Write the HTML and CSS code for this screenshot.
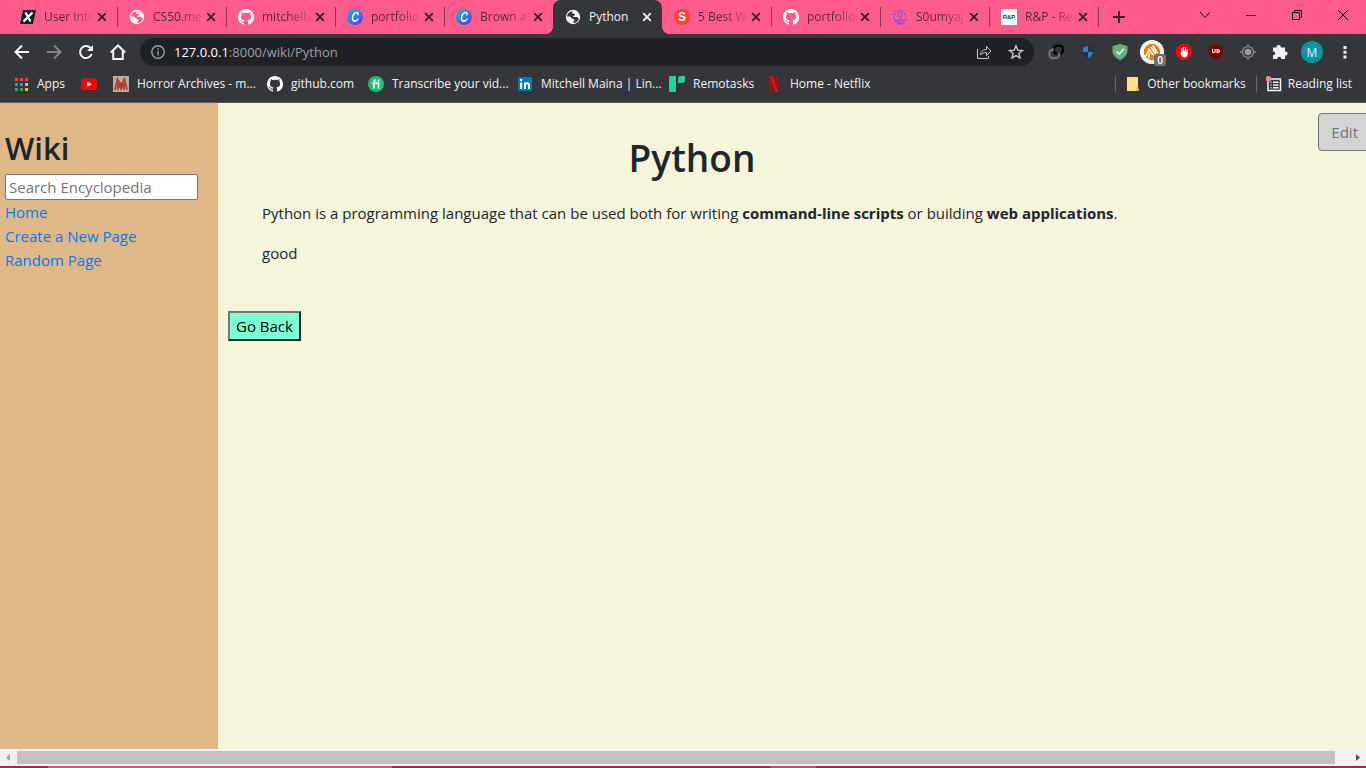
FILE: index.html
```
<!DOCTYPE html>
<html lang="en">
<head>
<meta charset="utf-8">
<title>Python</title>
<link rel="stylesheet" href="styles.css">
</head>
<body>
<svg class="defs" aria-hidden="true">
  <symbol id="x" viewBox="0 0 10 10"><path d="M1.2 1.2l7.6 7.6M8.8 1.2L1.2 8.8" stroke="currentColor" stroke-width="1.8" fill="none"/></symbol>
  <symbol id="github" viewBox="0 0 16 16"><path fill="currentColor" fill-rule="evenodd" d="M8 0C3.58 0 0 3.58 0 8c0 3.54 2.29 6.53 5.47 7.59.4.07.55-.17.55-.38 0-.19-.01-.82-.01-1.49-2.01.37-2.53-.49-2.69-.94-.09-.23-.48-.94-.82-1.13-.28-.15-.68-.52-.01-.53.63-.01 1.08.58 1.23.82.72 1.21 1.87.87 2.33.66.07-.52.28-.87.51-1.07-1.78-.2-3.64-.89-3.64-3.95 0-.87.31-1.59.82-2.15-.08-.2-.36-1.02.08-2.12 0 0 .67-.21 2.2.82.64-.18 1.32-.27 2-.27s1.36.09 2 .27c1.53-1.04 2.2-.82 2.2-.82.44 1.1.16 1.92.08 2.12.51.56.82 1.27.82 2.15 0 3.07-1.87 3.75-3.65 3.95.29.25.54.73.54 1.48 0 1.07-.01 1.93-.01 2.2 0 .21.15.46.55.38A8.01 8.01 0 0 0 16 8c0-4.42-3.58-8-8-8z"/></symbol>
  <symbol id="globe" viewBox="0 0 16 16"><circle cx="8" cy="8" r="7.2" fill="#f5f5f5"/><path class="land" d="M8.2 2.2c-1 .6-1.4 1.5-.6 2.2.9.5 1.8-.1 2.3.7.4.9-.4 1.4-1.3 1.6-.8.2-.6 1.1.2 1.3 1.5.1 3-.3 4 .6 1 .7 1.2 1.2.7 2.1-1.1 2.4-3.4 3.2-5.3 3.1-.4-.8.5-1.3 1-2 .5-.9.1-1.7-.8-1.9-1.4-.2-2.2-.8-2.6-1.7C5.200 7 3.600 7.600 2 7.400c.4-2.700 2.700-5.200 6.200-5.200z"/></symbol>
  <symbol id="canva" viewBox="0 0 16 16"><defs><linearGradient id="cg" x1="0" y1="0" x2=".8" y2="1"><stop offset="0" stop-color="#00c4cc"/><stop offset=".5" stop-color="#2a85e5"/><stop offset="1" stop-color="#7d2ae8"/></linearGradient></defs><circle cx="8" cy="8" r="8" fill="url(#cg)"/><path d="M10.800 5.700c.6-.8.3-2.200-1.100-2.200-2.300 0-4.200 2.800-4.200 5.400 0 2 1 3.300 2.500 3.300 1.300 0 2.300-.9 3-2" fill="none" stroke="#fff" stroke-width="1.500" stroke-linecap="round"/></symbol>
</svg>

<header class="browser">
  <nav class="tabs" aria-label="Tabs">
    <div class="tab"><svg class="fav" viewBox="0 0 16 16"><path d="M3 1h13l-3 14H0z" fill="#14232b"/><path d="M5.500 3.500l5 9M12.500 3.500l-9 9" stroke="#fff" stroke-width="2.200"/></svg><span class="tab-title">User Inte</span><button class="close" aria-label="Close tab"><svg><use href="#x"/></svg></button></div>
    <div class="tab"><svg class="fav on-pink"><use href="#globe"/></svg><span class="tab-title">CS50.me</span><button class="close" aria-label="Close tab"><svg><use href="#x"/></svg></button></div>
    <div class="tab"><svg class="fav"><use href="#github"/></svg><span class="tab-title">mitchells</span><button class="close" aria-label="Close tab"><svg><use href="#x"/></svg></button></div>
    <div class="tab"><svg class="fav"><use href="#canva"/></svg><span class="tab-title">portfolio</span><button class="close" aria-label="Close tab"><svg><use href="#x"/></svg></button></div>
    <div class="tab before-active"><svg class="fav"><use href="#canva"/></svg><span class="tab-title">Brown a</span><button class="close" aria-label="Close tab"><svg><use href="#x"/></svg></button></div>
    <div class="tab active"><svg class="fav on-dark"><use href="#globe"/></svg><span class="tab-title">Python</span><button class="close" aria-label="Close tab"><svg><use href="#x"/></svg></button></div>
    <div class="tab"><svg class="fav" viewBox="0 0 16 16"><circle cx="8" cy="8" r="8" fill="#f44336"/><text x="8" y="12" text-anchor="middle" font-size="12" font-weight="700" fill="#fff">S</text></svg><span class="tab-title">5 Best W</span><button class="close" aria-label="Close tab"><svg><use href="#x"/></svg></button></div>
    <div class="tab"><svg class="fav"><use href="#github"/></svg><span class="tab-title">portfolio</span><button class="close" aria-label="Close tab"><svg><use href="#x"/></svg></button></div>
    <div class="tab"><svg class="fav" viewBox="0 0 16 16" fill="none" stroke="#9251dc" stroke-width="1.200"><path d="M3 3.200a7 7 0 0 1 11 3.300M13 12.800A7 7 0 0 1 2 9.500M1 5.500h3M12 10.500h3M1 8h2M13 8h2M3.500 13.500c1-4 8-4 9 0M5 14.800h6"/><circle cx="8" cy="6" r="2.200"/><circle cx="8" cy="12" r="1"/></svg><span class="tab-title">S0umyaj</span><button class="close" aria-label="Close tab"><svg><use href="#x"/></svg></button></div>
    <div class="tab"><svg class="fav" viewBox="0 0 16 16"><path d="M0 0h16v16H0z" fill="#fff"/><text x="8" y="10" text-anchor="middle" font-size="6" font-weight="700" fill="#174d25">R&amp;P</text></svg><span class="tab-title">R&amp;P - Re</span><button class="close" aria-label="Close tab"><svg><use href="#x"/></svg></button></div>
    <button class="new-tab" aria-label="New tab"><svg viewBox="0 0 12 12"><path d="M6 0v12M0 6h12" stroke="currentColor" stroke-width="1.800"/></svg></button>
    <div class="window-controls">
      <button aria-label="Search tabs"><svg viewBox="0 0 12 12"><path d="M1 3l5 5.500L11 3"/></svg></button>
      <button aria-label="Minimize"><svg viewBox="0 0 12 12"><path d="M1 6.500h10"/></svg></button>
      <button aria-label="Restore"><svg viewBox="0 0 12 12"><path d="M1.500 3.500h7v7h-7zM3.500 3.500v-2h7v7h-2"/></svg></button>
      <button aria-label="Close"><svg viewBox="0 0 12 12"><path d="M1 1l10 10M11 1L1 11"/></svg></button>
    </div>
  </nav>

  <div class="toolbar">
    <div class="nav-buttons">
      <button aria-label="Back"><svg viewBox="0 0 16 16"><path d="M15 8H2M8 1.500L1.500 8 8 14.500"/></svg></button>
      <button class="dim" aria-label="Forward"><svg viewBox="0 0 16 16"><path d="M1 8h13M8 1.500L14.500 8 8 14.500"/></svg></button>
      <button aria-label="Reload"><svg viewBox="0 0 16 16"><path d="M13.700 10A6 6 0 1 1 12.500 4"/><path d="M15 1v6H9z" fill="currentColor" stroke="none"/></svg></button>
      <button aria-label="Home"><svg viewBox="0 0 16 16"><path d="M.8 8.500L8 1.500l7.200 7M3.200 7v8h9.600V7"/></svg></button>
    </div>
    <div class="omnibox">
      <svg class="info" viewBox="0 0 14 14"><circle cx="7" cy="7" r="6.200"/><path d="M7 6v4.500M7 3.300v1.600"/></svg>
      <span class="url"><b>127.0.0.1</b>:8000/wiki/Python</span>
      <button aria-label="Share"><svg viewBox="0 0 16 16"><path d="M1.500 5v9.500h11V12M4.500 11c.5-4 2.700-5.500 6-5.500V2.500L15 7l-4.500 4.500v-3c-3 0-4.500.7-6 2.500z"/></svg></button>
      <button aria-label="Bookmark"><svg class="star" viewBox="0 0 16 16"><path d="M8 1.800l1.800 4.300 4.700.4-3.600 3 1.100 4.600-4-2.500-4 2.500 1.100-4.600-3.600-3 4.700-.4z"/></svg></button>
    </div>
    <div class="extensions">
      <button aria-label="Link extension"><svg viewBox="0 0 16 16" fill="none" stroke-width="2.400"><rect x="6" y="1.800" width="8.800" height="8" rx="3" stroke="#050505"/><path d="M6 5.800H4.500A3 3 0 0 0 1.500 8.800v2.200a3 3 0 0 0 3 3H8a3 3 0 0 0 3-3V8.500" stroke="#707070"/></svg></button>
      <button aria-label="Shield extension"><svg viewBox="0 0 16 16"><path d="M8 1l5.500 2v4.500c0 3.500-2.500 6-5.500 7.500-3-1.500-5.500-4-5.500-7.500V3z" fill="#28333d"/><path d="M3 3.500L8 2v6H3zM8 8h5c-.5 3-2.600 5-5 6.200z" fill="#2f80d0"/></svg></button>
      <button aria-label="AdGuard"><svg viewBox="0 0 16 16"><path d="M8 0l7.500 2v5c0 4-3.200 7-7.500 9C3.700 14 .5 11 .5 7V2z" fill="#67b279"/><path d="M4.500 7.500L7.300 10l4.500-5" fill="none" stroke="#fff" stroke-width="1.500"/></svg></button>
      <button class="avast" aria-label="Avast, 0 blocked"><svg viewBox="0 0 24 24"><circle cx="12" cy="12" r="12" fill="#fff"/><circle cx="12" cy="12" r="8.200" fill="#f70"/><path d="M4.500 17.500c2-1.500 3-3.500 4-6.500M8.500 18l1-4.500M8.500 9l5 6M11 7.500l4.500 6M13 6l4 6.500" stroke="#fff" stroke-width="1.600" stroke-linecap="round" fill="none"/></svg><span class="badge">0</span></button>
      <button aria-label="AdBlock"><svg viewBox="0 0 16 16"><path d="M5 0h6l5 5v6l-5 5H5l-5-5V5z" fill="#e40d0d"/><path d="M4 8l1.500.7V4h1v3.500h.7V3h1v4.500h.7V3.300h1v4.500h.7V5h1v5c0 2-1 3.500-3.300 3.500C6 13.500 5.500 11.500 4 8z" fill="#fff"/></svg></button>
      <button aria-label="uBlock Origin"><svg viewBox="0 0 16 16"><path d="M8 0c2 1.500 4 2 6.500 2v6c0 4-3 6.500-6.500 8-3.500-1.500-6.500-4-6.500-8V2C4 2 6 1.500 8 0z" fill="#800000"/><path d="M4.500 5v2.500c0 1.500 2.600 1.500 2.600 0V5M9 5.500v3c3.200 0 3.200-3 0-3z" fill="none" stroke="#fff" stroke-width="1.100"/></svg></button>
      <button aria-label="Target extension"><svg viewBox="0 0 16 16"><circle cx="8" cy="8" r="5.500" fill="none" stroke="#858585" stroke-width="1.400"/><circle cx="8" cy="8" r="3.300" fill="#999"/><path d="M8 0v3M8 13v3M0 8h3M13 8h3" stroke="#858585" stroke-width="1.500"/></svg></button>
      <button aria-label="Extensions"><svg viewBox="0 0 16 16"><path d="M6.500 1C8 1 9 2 8.800 3.500H13V7.500c3.500-.2 3.500 4 0 4V15H9.200c0-3-4-3-4 0H1v-4c3 0 3-3.600 0-3.600V3.500h3.700C4.300 2 5.200 1 6.500 1z" fill="#f1f3f4"/></svg></button>
    </div>
    <button class="profile" aria-label="Profile M">M</button>
    <button class="menu" aria-label="Menu"><svg viewBox="0 0 4 14" fill="#f1f3f4"><path d="M.5 1h3v3h-3zM.5 5.700h3v3h-3zM.5 10.400h3v3h-3z"/></svg></button>
  </div>

  <nav class="bookmarks" aria-label="Bookmarks">
    <div class="bookmark-list">
      <a href="#apps"><svg viewBox="0 0 16 16"><path d="M2 2h3v3H2zM7 2h3v3H7zM12 2h3v3h-3z" fill="#ea4335"/><path d="M2 7h3v3H2zM2 12h3v3H2zM7 12h3v3H7z" fill="#34a853"/><path d="M7 7h3v3H7z" fill="#4285f4"/><path d="M12 7h3v3h-3zM12 12h3v3h-3z" fill="#fbbc04"/></svg>Apps</a>
      <a href="#youtube" aria-label="YouTube"><svg viewBox="0 0 16 16"><rect y="2.500" width="16" height="11.500" rx="2.500" fill="#f00"/><path d="M6.300 5.800v5l4.300-2.500z" fill="#fff"/></svg></a>
      <a href="#horror"><svg viewBox="0 0 16 16"><path d="M0 0h16v16H0z" fill="#b8b09c"/><path d="M2 14L4.500 3 8 9l3.500-6L14 14M5 14V7l3 6 3-6v7" fill="none" stroke="#b63a32" stroke-width="1.700"/></svg>Horror Archives - m...</a>
      <a href="#github-home"><svg><use href="#github"/></svg>github.com</a>
      <a href="#transcribe"><svg viewBox="0 0 16 16"><circle cx="8" cy="8" r="8" fill="#1dbf73"/><path d="M6 12.500V6c0-1.300.7-2 2-2M4.200 7h6.300v5.500" fill="none" stroke="#fff" stroke-width="1.700"/><circle cx="10.500" cy="4.500" r="1" fill="#fff"/></svg>Transcribe your vid...</a>
      <a href="#linkedin"><svg viewBox="0 0 16 16"><path d="M1 1h14v14H1z" fill="#0077b5"/><path d="M4.200 6.500V13M8 13V6.500M8 9c0-2.500 4-2.500 4 0v4" fill="none" stroke="#fff" stroke-width="2"/><circle cx="4.200" cy="4" r="1.200" fill="#fff"/></svg>Mitchell Maina | Lin...</a>
      <a href="#remotasks"><svg viewBox="0 0 16 16"><path d="M0 0h7v16H0zM9 7V3c0-2 1-3 3-3h4v4c0 2-1 3-3 3z" fill="#28cf9b"/></svg>Remotasks</a>
      <a href="#netflix"><svg viewBox="0 0 16 16"><path d="M3.500 0h3v16h-3zM9.500 0h3v16h-3z" fill="#b1060f"/><path d="M3.500 0h3l6 16h-3z" fill="#e50914"/></svg>Home - Netflix</a>
    </div>
    <div class="bookmark-end">
      <a href="#other"><svg viewBox="0 0 16 16"><path d="M2 1h11v11l1 3H2z" fill="#ffe082"/><path d="M13 10l-2 2v3h3z" fill="#f1c232"/></svg>Other bookmarks</a>
      <a href="#reading"><svg viewBox="0 0 16 16"><path d="M3 3h11.500v11.500H2V4M4.500 6.200h1M7 6.200h5.500M4.500 9h1M7 9h5.500M4.500 11.800h1M7 11.800h5.500" fill="none" stroke="#f1f3f4" stroke-width="1.500"/><circle cx="2.500" cy="2.800" r="2.800" fill="#f28b82"/></svg>Reading list</a>
    </div>
  </nav>
</header>

<div class="page">
  <aside class="sidebar">
    <h2>Wiki</h2>
    <form><input type="text" aria-label="Search Encyclopedia" placeholder="Search Encyclopedia"></form>
    <a href="#home">Home</a>
    <a href="#create">Create a New Page</a>
    <a href="#random">Random Page</a>
  </aside>
  <main class="main">
    <article>
      <h1>Python</h1>
      <div class="entry">
        <p>Python is a programming language that can be used both for writing <strong>command-line scripts</strong> or building <strong>web applications</strong>.</p>
        <p>good</p>
      </div>
      <button class="go-back" type="button">Go Back</button>
    </article>
    <div class="actions"><button class="edit" type="button">Edit</button></div>
  </main>
</div>

<div class="scrollbar" aria-hidden="true">
  <svg viewBox="0 0 17 17"><path d="M10 5v7L6 8.500z" fill="#a3a3a3"/></svg>
  <div class="track"><div class="thumb"></div></div>
  <svg viewBox="0 0 17 17"><path d="M7 5v7l4-3.500z" fill="#505050"/></svg>
</div>
<footer class="taskbar"><span class="task-open"></span><span class="task-item"></span></footer>
</body>
</html>
```
FILE: styles.css
```
* { box-sizing: border-box; }

body {
  margin: 0;
  height: 100vh;
  display: flex;
  flex-direction: column;
  overflow: hidden;
  font-family: "Open Sans", "Noto Sans", sans-serif;
  font-size: 15px;
  line-height: 24px;
  color: #212529;
}

.defs { position: absolute; width: 0; height: 0; }

button { font: inherit; color: inherit; }

.browser { flex: none; background: #35363a; border-bottom: 1px solid #5b5c5f; }

.browser button {
  display: grid;
  place-items: center;
  padding: 0;
  border: 0;
  background: none;
}

/* Tab strip */
.tabs {
  display: flex;
  height: 34px;
  padding-left: 8px;
  background: #ff5b8c;
  font-size: 12px;
}

.tab {
  display: flex;
  align-items: center;
  flex: 0 1 109px;
  min-width: 0;
  padding: 0 9px 0 12px;
  position: relative;
}

.tab::after {
  content: "";
  position: absolute;
  right: -1px;
  top: 7px;
  width: 1px;
  height: 20px;
  background: #8b3a52;
}

.tab.before-active::after, .tab.active::after { display: none; }

.fav { flex: none; width: 16px; height: 16px; color: #fff; font-family: "Liberation Sans", Arial, sans-serif; }
.on-pink { fill: #ff5b8c; }
.on-dark { fill: #35363a; }

.tab-title {
  flex: 1;
  min-width: 0;
  margin-left: 8px;
  overflow: hidden;
  white-space: nowrap;
  color: #5d2a3a;
  mask-image: linear-gradient(to right, #000 50%, transparent);
}

.close { flex: none; width: 12px; height: 12px; color: #35202a; }
.close svg { width: 10px; height: 10px; }

.tab.active { background: #35363a; border-radius: 8px 8px 0 0; }
.tab.active::before {
  content: "";
  position: absolute;
  left: -8px;
  right: -8px;
  bottom: 0;
  height: 8px;
  background:
    radial-gradient(circle at 0 0, transparent 8px, #35363a 8px) left / 8px 8px no-repeat,
    radial-gradient(circle at 100% 0, transparent 8px, #35363a 8px) right / 8px 8px no-repeat;
}
.tab.active .tab-title { color: #f1f3f4; mask-image: none; }
.tab.active .close { color: #f1f3f4; }

.new-tab { width: 42px; color: #35202a; }
.new-tab svg { width: 12px; height: 12px; }

.window-controls { display: flex; margin-left: auto; height: 29px; }
.window-controls button { width: 46px; }
.window-controls svg { width: 12px; height: 12px; fill: none; stroke: #111; }

/* Address row */
.toolbar { display: flex; align-items: center; height: 36px; padding-right: 13px; color: #f1f3f4; }

.nav-buttons { display: flex; padding: 0 6px; }
.nav-buttons button { width: 32px; height: 32px; }
.nav-buttons svg { width: 16px; height: 16px; fill: none; stroke: currentColor; stroke-width: 2; }
.nav-buttons .dim { color: #85868a; }

.omnibox {
  flex: 1;
  display: flex;
  align-items: center;
  height: 28px;
  padding: 0 2px 0 11px;
  border-radius: 14px;
  background: #202124;
  font-size: 13px;
}
.omnibox svg { width: 16px; height: 16px; fill: none; stroke: #c6c8ca; stroke-width: 1; }
.omnibox .star { stroke-width: 1.4; }
.omnibox .info { width: 14px; height: 14px; stroke: #9aa0a6; stroke-width: 1.4; }
.omnibox button { width: 32px; }
.url { flex: 1; margin-left: 9px; color: #9aa0a6; }
.url b { font-weight: 400; color: #fff; }

.extensions { display: flex; padding-left: 6px; }
.extensions button { width: 32px; height: 32px; }
.extensions svg { width: 16px; height: 16px; }
.extensions .avast { position: relative; }
.extensions .avast svg { width: 24px; height: 24px; }
.badge {
  position: absolute;
  right: 2px;
  bottom: 2px;
  width: 12px;
  height: 12px;
  border-radius: 2px;
  background: #6e7078;
  color: #fff;
  font-size: 10px;
  font-weight: 600;
  line-height: 12px;
  text-align: center;
}

.browser .profile {
  width: 22px;
  height: 22px;
  margin: 0 14px 0 5px;
  border-radius: 50%;
  background: #0097a7;
  font-size: 12px;
}
.browser .menu { width: 16px; height: 24px; }
.menu svg { width: 4px; height: 14px; }

/* Bookmark row */
.bookmarks {
  display: flex;
  justify-content: space-between;
  height: 32px;
  padding: 0 14px 4px 13px;
  font-size: 12px;
}
.bookmarks a { display: flex; align-items: center; gap: 8px; color: #f1f3f4; text-decoration: none; white-space: nowrap; }
.bookmarks svg { flex: none; width: 16px; height: 16px; color: #fff; }
.bookmark-list { display: grid; grid-template-columns: 68px 32px 154px 101px 149px 152px 97px auto; }
.bookmark-end { display: flex; align-items: center; gap: 10px; }
.bookmark-end a { gap: 6px; padding-left: 9px; border-left: 1px solid #6a6b6f; height: 16px; }

/* Wiki page */
.page { flex: 1; display: flex; min-height: 0; background: beige; }

.sidebar {
  flex: 0 0 218px;
  display: flex;
  flex-direction: column;
  align-items: flex-start;
  padding: 26px 20px 0 5px;
  background: burlywood;
}
.sidebar h2 { margin: 0 0 6px; font-size: 31px; line-height: 39px; font-weight: 600; }
.sidebar form { width: 100%; height: 26px; display: flex; }
.sidebar input {
  width: 100%;
  padding: 1px 3px;
  border: 1px solid #767676;
  border-radius: 2px;
  background: #fff;
  font: inherit;
}
.sidebar input::placeholder { color: #757575; }
.sidebar a { color: #007bff; text-decoration: none; }

.main {
  flex: 1;
  display: grid;
  grid-template-columns: 1fr 210px;
  padding: 10px 0 0 10px;
  overflow: hidden;
}
article h1 { margin: 21px 0 19px; font-size: 37px; line-height: 48px; font-weight: 600; text-align: center; }
.entry { padding-left: 34px; white-space: nowrap; }
.entry p { margin: 0 0 16px; }
.go-back {
  margin-top: 30px;
  padding: 1px 6px;
  border: 2px solid;
  border-color: #767676 #212529 #212529 #767676;
  background: aquamarine;
  color: #000;
}
.actions { display: flex; justify-content: flex-end; align-items: flex-start; }
.edit {
  flex: none;
  margin-right: -5px;
  padding: 6px 12px;
  border: 1px solid #6c757d;
  border-radius: 4px;
  background: lightgray;
  color: #6c757d;
}

/* Bottom edge */
.scrollbar { flex: none; display: flex; height: 17px; background: #f1f1f1; }
.scrollbar svg { width: 17px; height: 17px; }
.track { flex: 1; padding: 2px 14px 2px 0; }
.thumb { height: 13px; background: #c1c1c1; }

.taskbar { flex: none; display: flex; height: 2px; padding-left: 48px; background: #b91f51; }
.task-open { width: 344px; background: #f8447c; }
.task-item { width: 45px; margin-left: 379px; background: #dc4274; }
```
